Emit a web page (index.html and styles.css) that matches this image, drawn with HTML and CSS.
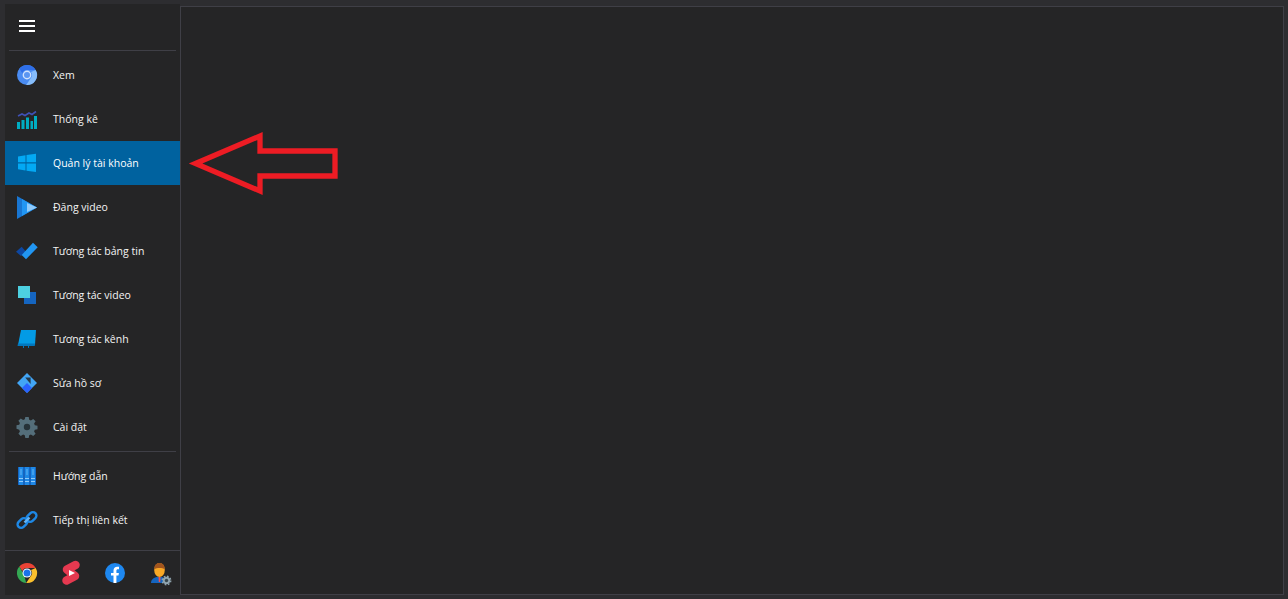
FILE: index.html
```html
<!DOCTYPE html>
<html lang="en">

<head>
  <meta charset="UTF-8">
  <title>Menu</title>
  <link rel="stylesheet" href="styles.css">
</head>

<body>
  <div class="app">

    <!-- Sidebar -->
    <div class="sidebar">
      <div class="top">
        <div class="burger"><span></span><span></span><span></span></div>
      </div>
      <div class="line"></div>

      <div class="menu">
        <div class="item">
          <svg class="icon" viewBox="0 0 20 20">
            <circle cx="10" cy="10" r="10" fill="#4a8cf2"/>
            <path d="M10 0a10 10 0 0 1 8.700 5H10a5 5 0 0 0-4.700 3.300L2.300 3.600A10 10 0 0 1 10 0z" fill="#2f6fe8"/>
            <path d="M18.700 5A10 10 0 0 1 9.200 20l4.300-6.500A5 5 0 0 0 14 7z" fill="#86bdfb"/>
            <circle cx="10" cy="10" r="3.700" fill="#5a96f2" stroke="#cfe2fd" stroke-width="1.400"/>
          </svg>
          <span>Xem</span>
        </div>
        <div class="item">
          <svg class="icon" viewBox="0 0 20 20">
            <path d="M1 7l4-2 3 1.500 4-2.500 3 1.500 4-3" fill="none" stroke="#3f51b5" stroke-width="1.600"/>
            <path d="M0 13h3v7H0zM4.500 11h3v9h-3zM9 8.500h3V20H9zM13.500 12h2.500v8h-2.500zM17 7h3v13h-3z" fill="#00acc1"/>
          </svg>
          <span>Thống kê</span>
        </div>
        <div class="item active">
          <svg class="icon" viewBox="0 0 20 20">
            <path d="M1 3.500l7.500-1.200v7H1zM9.500 2.100L19 .8v8.500H9.500zM1 10.500h7.500v7L1 16.300zM9.500 10.500H19V19l-9.500-1.300z" fill="#03a9f4"/>
          </svg>
          <span>Quản lý tài khoản</span>
        </div>
        <div class="item">
          <svg class="icon" viewBox="0 0 20 20">
            <path d="M0 -1l20 11.500L0 22z" fill="#1976d2"/>
            <path d="M5 2l15 8.500L5 19z" fill="#2196f3"/>
            <path d="M10 6l10 4.500L10 15z" fill="#90caf9"/>
          </svg>
          <span>Đăng video</span>
        </div>
        <div class="item">
          <svg class="icon" viewBox="0 0 20 20">
            <path d="M-1 10.700L4.700 5.700 9 10.700 4 15z" fill="#0d47a1"/>
            <path d="M4.700 14L16 1.700l4.700 4.600L9 18.300z" fill="#2196f3"/>
          </svg>
          <span>Tương tác bảng tin</span>
        </div>
        <div class="item">
          <svg class="icon" viewBox="0 0 20 20">
            <rect x="7" y="7" width="12" height="12" fill="#1565c0"/>
            <rect x="1" y="1" width="12" height="12" fill="#4dd0e1"/>
          </svg>
          <span>Tương tác video</span>
        </div>
        <div class="item">
          <svg class="icon" viewBox="0 0 20 20">
            <path d="M6 19h1v-3H6zM11 19h1v-3h-1z" fill="#0277bd"/>
            <path d="M4 1h15l-1 15H1z" fill="#039be5"/>
            <path d="M1 14.500h17l-.2 2.500H.5z" fill="#0277bd"/>
          </svg>
          <span>Tương tác kênh</span>
        </div>
        <div class="item">
          <svg class="icon" viewBox="0 0 22 22">
            <path d="M11 0l11 11-11 11L0 11z" fill="#42a5f5"/>
            <path d="M11 11l5.500 5.500L11 22l-5.500-5.500z" fill="#2962ff"/>
            <path d="M9 5h6v7z" fill="#1e1e1e" opacity=".8"/>
          </svg>
          <span>Sửa hồ sơ</span>
        </div>
        <div class="item">
          <svg class="icon" viewBox="0 0 20 20">
            <path d="M8.300 0h3.400l.5 2.700 1.700.7 2.300-1.500 2.400 2.400-1.500 2.300.7 1.700 2.700.5v3.400l-2.700.5-.7 1.700 1.500 2.300-2.400 2.400-2.300-1.500-1.700.7-.5 2.700H8.300l-.5-2.700-1.700-.7-2.300 1.500-2.400-2.400 1.500-2.300-.7-1.700L-.5 11.700V8.300l2.700-.5.7-1.700L1.400 3.800l2.400-2.400 2.300 1.500 1.700-.7z" fill="#546e7a"/>
            <circle cx="10" cy="10" r="3.200" fill="#263238"/>
          </svg>
          <span>Cài đặt</span>
        </div>
      </div>

      <div class="line line-two"></div>

      <div class="menu">
        <div class="item">
          <svg class="icon" viewBox="0 0 20 20">
            <rect x="1" y="1" width="18" height="18" fill="#1565c0"/>
            <path d="M2 1h4v18H2zM8 1h4v18H8zM14 1h4v18h-4z" fill="#1e88e5"/>
            <path d="M3.500 3h1v6h-1zM9.500 3h1v6h-1zM15.500 3h1v6h-1z" fill="#64b5f6"/>
            <path d="M2 12h4v1H2zM8 12h4v1H8zM14 12h4v1h-4zM2 15h4v1H2zM8 15h4v1H8zM14 15h4v1h-4z" fill="#90caf9"/>
          </svg>
          <span>Hướng dẫn</span>
        </div>
        <div class="item">
          <svg class="icon" viewBox="0 0 20 20">
            <rect x="0" y="9.500" width="11" height="7" rx="3.500" transform="rotate(-45 5.500 13)" fill="none" stroke="#1e88e5" stroke-width="2.400"/>
            <rect x="9" y="3.500" width="11" height="7" rx="3.500" transform="rotate(-45 14.500 7)" fill="none" stroke="#1e88e5" stroke-width="2.400"/>
            <path d="M7.500 12.500l5-5" stroke="#64b5f6" stroke-width="2.400"/>
          </svg>
          <span>Tiếp thị liên kết</span>
        </div>
      </div>

      <div class="bottom">
        <svg class="icon" viewBox="0 0 20 20">
          <path d="M10 0a10 10 0 0 1 8.700 5H10a5 5 0 0 0-4.700 3.300L2.300 3.600A10 10 0 0 1 10 0z" fill="#ea4335"/>
          <path d="M2.300 3.600l5 8.900L9.200 20A10 10 0 0 1 2.300 3.600z" fill="#34a853"/>
          <path d="M18.700 5A10 10 0 0 1 9.200 20l4.300-6.500A5 5 0 0 0 14 7z" fill="#fbc02d"/>
          <circle cx="10" cy="10" r="4.500" fill="#fff"/>
          <circle cx="10" cy="10" r="3.500" fill="#1a73e8"/>
        </svg>
        <svg class="icon" viewBox="0 0 20 20">
          <path d="M6 6.500l8.500-4.500M5.500 17.500l8.500-4.500M6 6.500l8 6.500" fill="none" stroke="#e53950" stroke-width="8.500" stroke-linecap="round"/>
          <path d="M8 7l6 3-6 3z" fill="#fff"/>
        </svg>
        <svg class="icon" viewBox="0 0 20 20">
          <circle cx="10" cy="10" r="10" fill="#1e88f0"/>
          <path d="M8.500 20v-7.500H6V10h2.500V7.500C8.500 5 10 3.700 12.200 3.700c.9 0 1.800.1 1.800.1v2.400h-1.100c-1.200 0-1.500.7-1.500 1.500V10h2.500l-.4 2.500h-2.100V20z" fill="#fff"/>
        </svg>
        <svg class="icon" viewBox="0 0 20 20">
          <path d="M2 20c0-3.500 2.500-5.500 6-6h5c1.500.5 2.500 1.500 3 3l-1 3H2z" fill="#1565c0"/>
          <path d="M9.500 14h2l-.3 5h-1.400z" fill="#ef5350"/>
          <ellipse cx="10.500" cy="7" rx="5.300" ry="7" fill="#f9a825"/>
          <path d="M5.200 6C5.200 1.500 8 0 10.500 0s5.300 1.500 5.300 6c-2.500-1.500-8-1.500-10.600 0z" fill="#a1551e"/>
          <circle cx="17.500" cy="17.500" r="3.700" fill="#90a4ae"/>
          <circle cx="17.500" cy="17.500" r="4.300" fill="none" stroke="#90a4ae" stroke-width="1.300" stroke-dasharray="1.700 1.680"/>
          <circle cx="17.500" cy="17.500" r="1.700" fill="#37474f"/>
        </svg>
      </div>
    </div>

    <!-- Content -->
    <div class="content"></div>
  </div>

  <svg class="arrow" width="152" height="67" viewBox="0 0 152 67">
    <polygon points="9.500,33.500 74,6 74,21 149,21 149,46 74,46 74,61" fill="none" stroke="#ed1c24" stroke-width="5.300"/>
  </svg>
</body>

</html>
```

FILE: styles.css
```css
html,
body {
  margin: 0;
  height: 100%;
  background: #2d2d30;
  overflow: hidden;
}

.app {
  display: flex;
  height: 599px;
  box-sizing: border-box;
  padding: 4px 4px 4px 5px;
}

.sidebar {
  width: 175px;
  flex: none;
  display: flex;
  flex-direction: column;
  background: #252526;
  color: #f4f4f4;
  font-family: "Open Sans", sans-serif;
  font-size: 10.5px;
}

.top {
  height: 44px;
  padding-bottom: 2px;
  display: flex;
  align-items: center;
  padding-left: 14px;
}

.burger {
  width: 16px;
}

.burger span {
  display: block;
  height: 2px;
  background: #fff;
  margin: 3px 0;
}

.line {
  height: 1px;
  margin: 0 4px 2px 4px;
  background: #3f3f46;
  flex: none;
}

.line-two {
  margin-top: 2px;
  margin-bottom: 2px;
}

.item {
  height: 44px;
  display: flex;
  align-items: center;
  padding-left: 12px;
  gap: 16px;
}

.item span {
  margin-top: -1px;
}

.item.active {
  background: #00629f;
  color: #fff;
}

.icon {
  width: 20px;
  height: 20px;
  flex: none;
  overflow: visible;
}

.bottom {
  margin-top: 8px;
  border-top: 1px solid #3f3f46;
  flex: 1;
  display: flex;
  align-items: center;
  padding: 0 0 0 12px;
  gap: 24px;
}

.content {
  flex: 1;
  margin-top: 2px;
  background: #252526;
  border: 1px solid #3f3f46;
}

.arrow {
  position: absolute;
  left: 186px;
  top: 130px;
}
```
